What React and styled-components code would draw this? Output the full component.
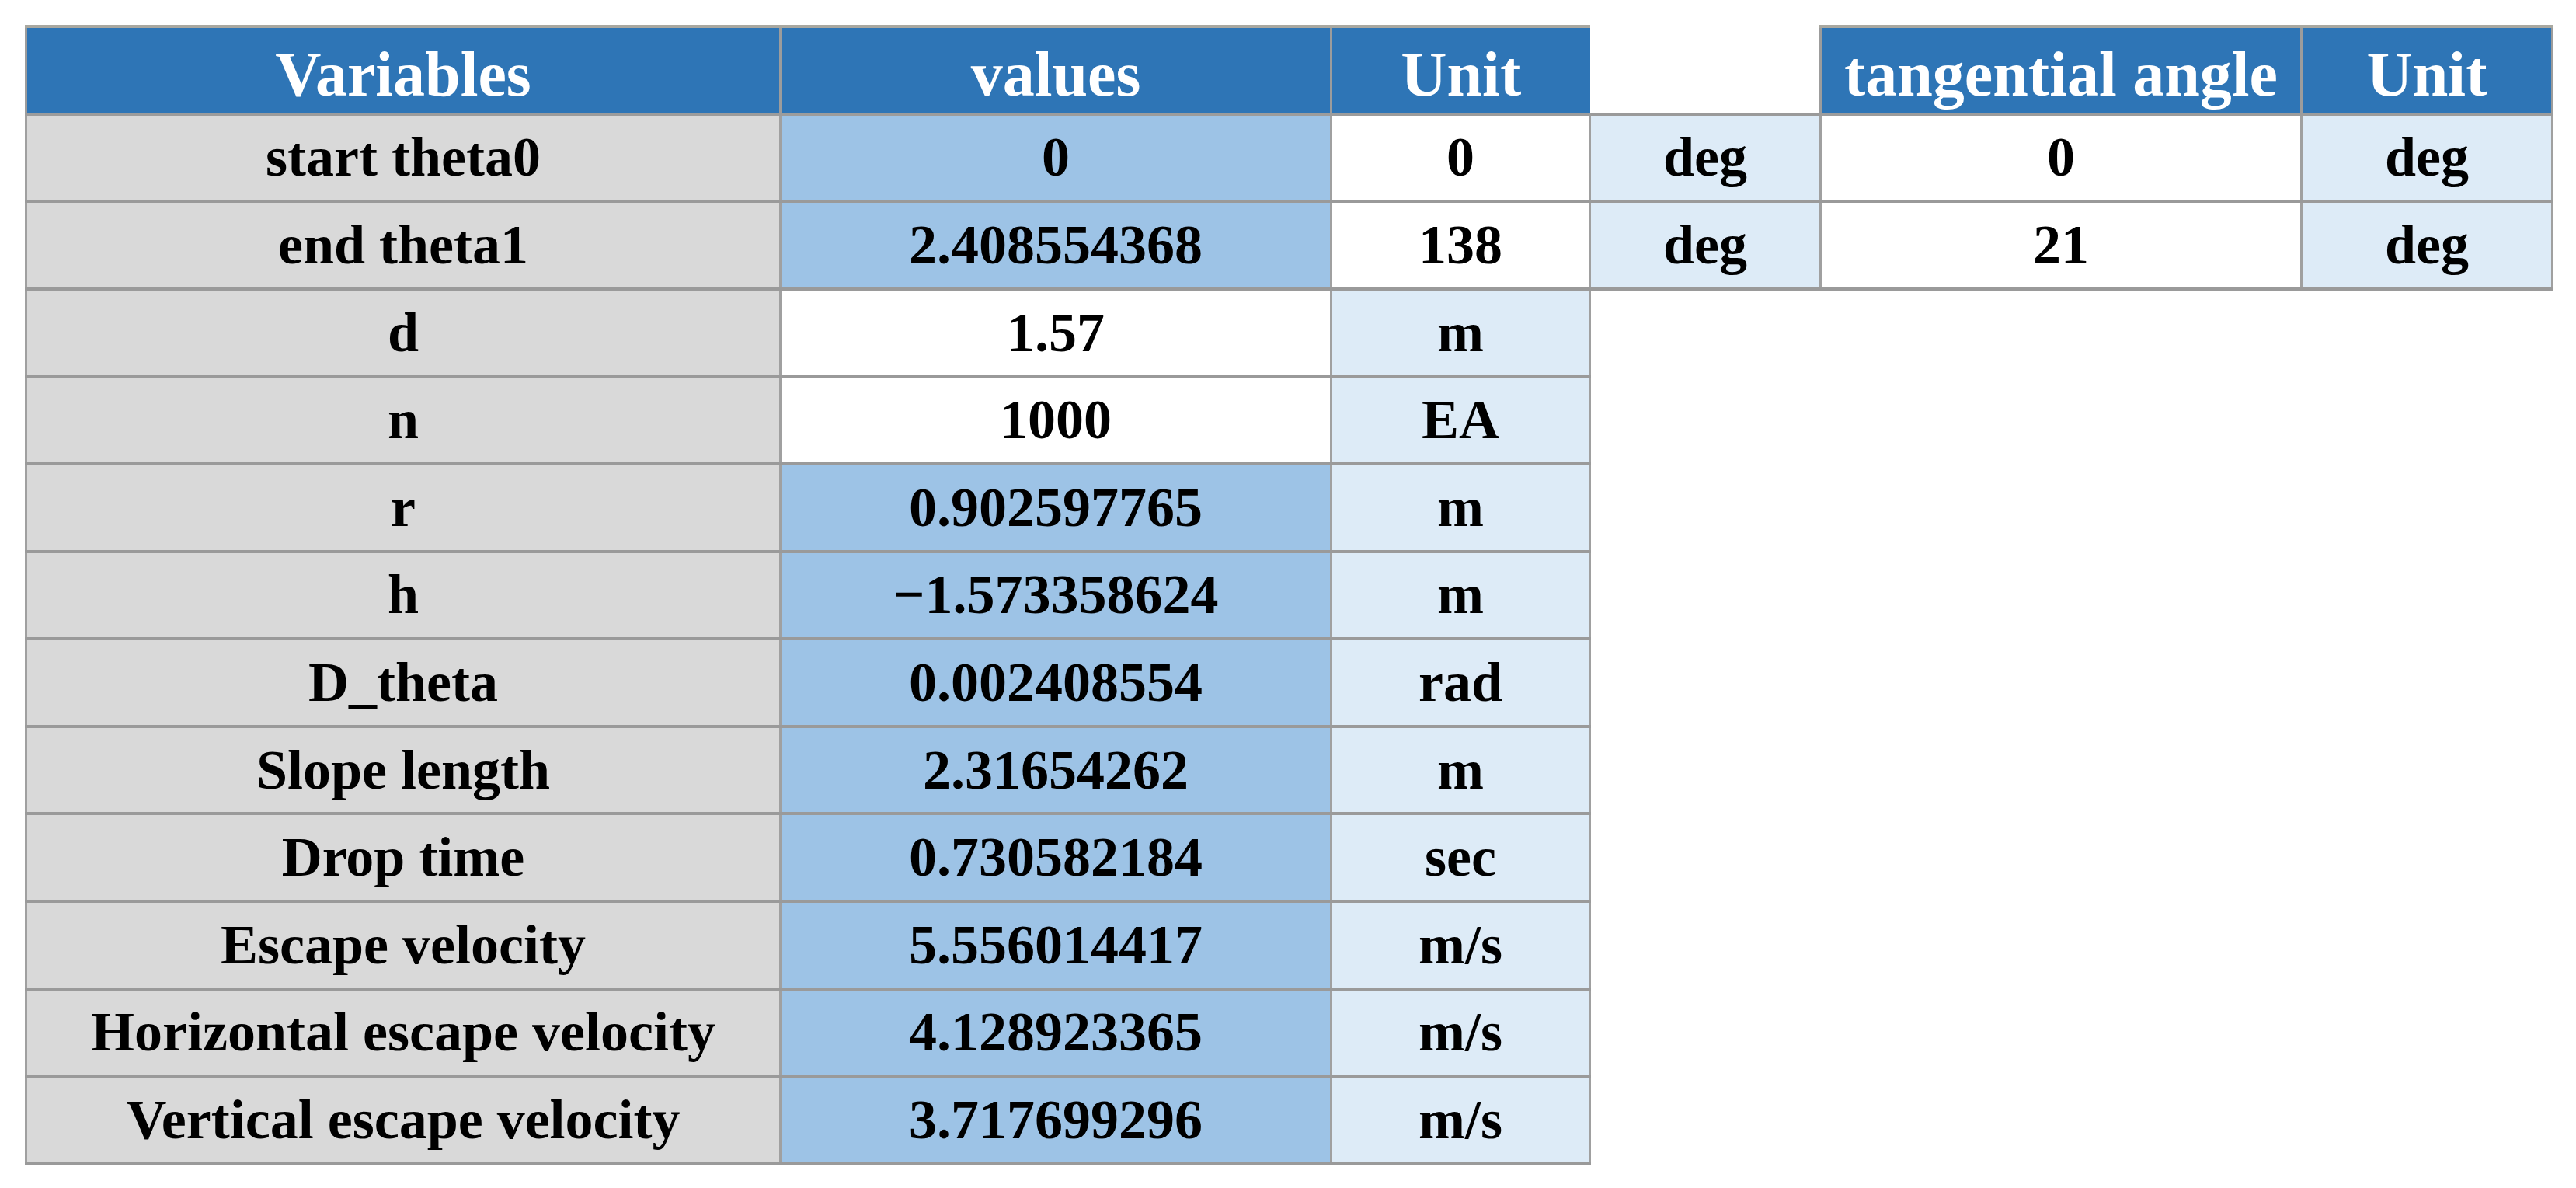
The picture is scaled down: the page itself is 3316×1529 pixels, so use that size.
import React from 'react';
import styled, { createGlobalStyle } from 'styled-components';

const GlobalStyle = createGlobalStyle`
  html, body {
    margin: 0;
    padding: 0;
    background: #ffffff;
  }
`;

const Page = styled.div`
  padding: 32px 0 0 32px;
  font-family: "Liberation Serif", "Times New Roman", serif;
  font-weight: 700;
  color: #000000;
`;

const Table = styled.table`
  border-collapse: collapse;
  table-layout: fixed;
  width: 3252px;
`;

const Col = styled.col`
  width: ${props => props.$w}px;
`;

const Row = styled.tr`
  height: 112.6px;
`;

const tones = {
  head: '#2e75b6',
  label: '#d9d9d9',
  value: '#9dc3e6',
  unit: '#ddebf7',
  plain: '#ffffff',
};

const HeadCell = styled.th`
  background: ${tones.head};
  color: #ffffff;
  font-size: 82px;
  font-weight: 700;
  padding: 12px 0 0;
  text-align: center;
  white-space: nowrap;
  border-top: 4px solid #a9a8a0;
  border-left: 3px solid #9c9c9c;
  border-right: ${props => (props.$open ? 'none' : '3px solid #9c9c9c')};
  border-bottom: 4px solid #9c9c9c;
`;

const Gap = styled.th`
  border: none;
  background: transparent;
`;

const Cell = styled.td`
  background: ${props => tones[props.$tone] || tones.plain};
  font-size: 72px;
  text-align: center;
  white-space: nowrap;
  padding: 0;
  border-top: 4px solid #9a9a9a;
  border-bottom: 4px solid #9a9a9a;
  border-left: 3px solid #a0a0a0;
  border-right: 3px solid #a0a0a0;
`;

const Blank = styled.td`
  border: none;
  background: transparent;
`;

const columns = [971, 709, 333, 297, 619, 323];

const rows = [
  { label: 'start theta0', value: '0', vt: 'value', unit: '0', ut: 'plain', extra: ['deg', '0', 'deg'] },
  { label: 'end theta1', value: '2.408554368', vt: 'value', unit: '138', ut: 'plain', extra: ['deg', '21', 'deg'] },
  { label: 'd', value: '1.57', vt: 'plain', unit: 'm', ut: 'unit' },
  { label: 'n', value: '1000', vt: 'plain', unit: 'EA', ut: 'unit' },
  { label: 'r', value: '0.902597765', vt: 'value', unit: 'm', ut: 'unit' },
  { label: 'h', value: '\u22121.573358624', vt: 'value', unit: 'm', ut: 'unit' },
  { label: 'D_theta', value: '0.002408554', vt: 'value', unit: 'rad', ut: 'unit' },
  { label: 'Slope length', value: '2.31654262', vt: 'value', unit: 'm', ut: 'unit' },
  { label: 'Drop time', value: '0.730582184', vt: 'value', unit: 'sec', ut: 'unit' },
  { label: 'Escape velocity', value: '5.556014417', vt: 'value', unit: 'm/s', ut: 'unit' },
  { label: 'Horizontal escape velocity', value: '4.128923365', vt: 'value', unit: 'm/s', ut: 'unit' },
  { label: 'Vertical escape velocity', value: '3.717699296', vt: 'value', unit: 'm/s', ut: 'unit' },
];

const extraTones = ['unit', 'plain', 'unit'];

function App() {
  return (
    <Page>
      <GlobalStyle />
      <Table>
        <colgroup>
          {columns.map((w, i) => (
            <Col key={i} $w={w} />
          ))}
        </colgroup>
        <thead>
          <Row>
            <HeadCell>Variables</HeadCell>
            <HeadCell>values</HeadCell>
            <HeadCell $open>Unit</HeadCell>
            <Gap />
            <HeadCell>tangential angle</HeadCell>
            <HeadCell>Unit</HeadCell>
          </Row>
        </thead>
        <tbody>
          {rows.map(row => (
            <Row key={row.label}>
              <Cell $tone="label">{row.label}</Cell>
              <Cell $tone={row.vt}>{row.value}</Cell>
              <Cell $tone={row.ut}>{row.unit}</Cell>
              {row.extra
                ? row.extra.map((text, i) => (
                    <Cell key={i} $tone={extraTones[i]}>{text}</Cell>
                  ))
                : [0, 1, 2].map(i => <Blank key={i} />)}
            </Row>
          ))}
        </tbody>
      </Table>
    </Page>
  );
}

export default App;
